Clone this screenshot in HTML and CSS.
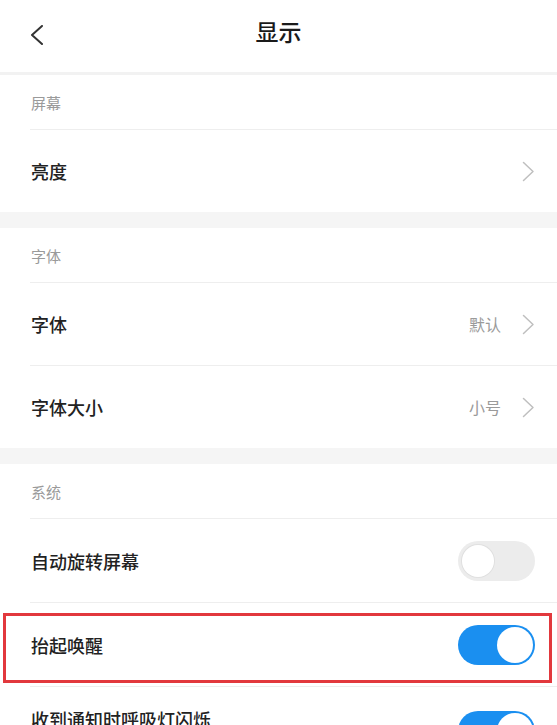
FILE: index.html
```html
<!DOCTYPE html>
<html lang="zh-CN">
<head>
<meta charset="utf-8">
<title>显示</title>
<link rel="stylesheet" href="styles.css">
</head>
<body>
<div class="page">
  <header class="topbar">
    <div class="back">
      <svg width="16" height="20" viewBox="0 0 16 20"><path d="M13 1 L3 10 L13 19" fill="none" stroke="#333" stroke-width="2" stroke-linecap="round" stroke-linejoin="round"/></svg>
    </div>
    <h1 class="title">显示</h1>
    <div></div>
  </header>
  <div class="band thin"></div>

  <section class="section">
    <div class="sec-head">屏幕</div>
    <div class="row"><div class="row-inner"><span class="label">亮度</span><span class="right"><svg class="chev" width="13" height="21" viewBox="0 0 13 21"><path d="M1.5 1.5 L11 10.5 L1.5 19.5" fill="none" stroke="#bfbfbf" stroke-width="1.5" stroke-linecap="round" stroke-linejoin="round"/></svg></span></div></div>
  </section>
  <div class="band"></div>

  <section class="section">
    <div class="sec-head">字体</div>
    <div class="row"><div class="row-inner"><span class="label">字体</span><span class="right"><span class="value">默认</span><svg class="chev" width="13" height="21" viewBox="0 0 13 21"><path d="M1.5 1.5 L11 10.5 L1.5 19.5" fill="none" stroke="#bfbfbf" stroke-width="1.5" stroke-linecap="round" stroke-linejoin="round"/></svg></span></div></div>
    <div class="row"><div class="row-inner"><span class="label">字体大小</span><span class="right"><span class="value">小号</span><svg class="chev" width="13" height="21" viewBox="0 0 13 21"><path d="M1.5 1.5 L11 10.5 L1.5 19.5" fill="none" stroke="#bfbfbf" stroke-width="1.5" stroke-linecap="round" stroke-linejoin="round"/></svg></span></div></div>
  </section>
  <div class="band"></div>

  <section class="section tall">
    <div class="sec-head">系统</div>
    <div class="row"><div class="row-inner"><span class="label">自动旋转屏幕</span><span class="right"><span class="toggle"><span class="knob"></span></span></span></div></div>
    <div class="row"><div class="row-inner"><span class="label">抬起唤醒</span><span class="right"><span class="toggle on"><span class="knob"></span></span></span></div><div class="highlight"></div></div>
    <div class="row"><div class="row-inner top"><span class="label">收到通知时呼吸灯闪烁</span><span class="right"><span class="toggle on"><span class="knob"></span></span></span></div></div>
  </section>
</div>
</body>
</html>
```

FILE: styles.css
```css
html, body {
  margin: 0;
  padding: 0;
  background: #ffffff;
}
body {
  font-family: "Noto Sans CJK SC", "Noto Sans", sans-serif;
  color: #1f1f1f;
  overflow: hidden;
}
.page {
  width: 557px;
}
.topbar {
  height: 72px;
  display: grid;
  grid-template-columns: 1fr auto 1fr;
  align-items: center;
}
.back {
  padding-left: 29px;
  padding-bottom: 3px;
  display: flex;
  align-items: center;
}
.title {
  margin: 0;
  font-size: 23px;
  font-weight: 500;
  color: #1a1a1a;
  line-height: 1;
  padding-bottom: 9px;
}
.band {
  height: 16px;
  background: #f5f5f5;
}
.band.thin {
  height: 3px;
  background: #f2f2f2;
}
.sec-head {
  height: 54px;
  padding-left: 31px;
  display: flex;
  align-items: center;
  font-size: 15px;
  color: #9a9a9a;
}
.row {
  position: relative;
  padding-left: 30px;
}
.row-inner {
  box-sizing: border-box;
  height: 83px;
  border-top: 1px solid #eeeeee;
  display: flex;
  align-items: center;
  justify-content: space-between;
  padding-right: 22px;
  padding-left: 1px;
}
.tall .row-inner {
  height: 84px;
}
.tall .row-inner.top {
  height: 88px;
}
.row-inner.top .label {
  align-self: flex-start;
  margin-top: 19px;
}
.label {
  font-size: 18px;
  font-weight: 500;
  color: #222222;
}
.right {
  display: flex;
  align-items: center;
}
.value {
  font-size: 16px;
  color: #9a9a9a;
  margin-right: 21px;
}
.chev {
  display: block;
}
.toggle {
  width: 77px;
  height: 40px;
  border-radius: 20px;
  background: #ececec;
  position: relative;
  display: block;
}
.toggle .knob {
  position: absolute;
  top: 4px;
  left: 4px;
  width: 32px;
  height: 32px;
  border-radius: 50%;
  background: #ffffff;
  box-shadow: 0 0 0 1px #e0e0e0;
}
.toggle.on {
  background: #1a8ff0;
}
.toggle.on .knob {
  left: auto;
  right: 2px;
  top: 2px;
  width: 36px;
  height: 36px;
  box-shadow: none;
}
.highlight {
  position: absolute;
  top: 11px;
  left: 3px;
  width: 549px;
  height: 70px;
  box-sizing: border-box;
  border: 3px solid #e2383d;
  pointer-events: none;
}
```
